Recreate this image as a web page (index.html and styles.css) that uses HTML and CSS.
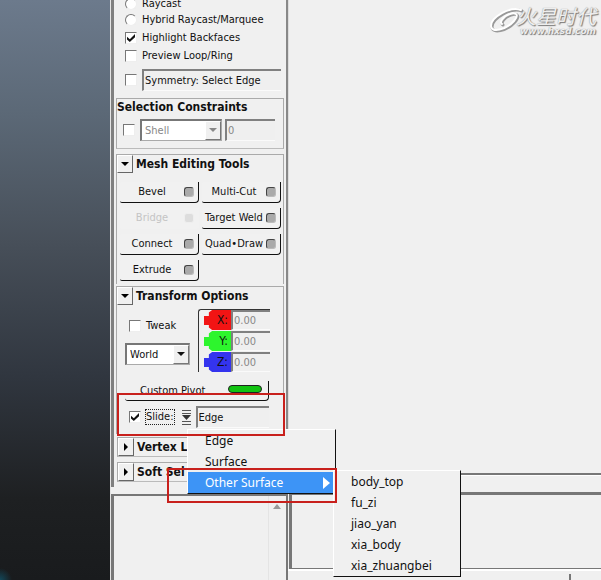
FILE: index.html
```html
<!DOCTYPE html>
<html lang="en">
<head>
<meta charset="utf-8">
<title>Modeling Toolkit</title>
<link rel="stylesheet" href="styles.css">
</head>
<body>
<div class="app">
  <div class="viewport"></div>
  <aside class="side">
    <div class="toolkit">
      <div class="picks">
        <label class="pick short"><input type="radio" name="mode">Raycast</label>
        <label class="pick short"><input type="radio" name="mode">Hybrid Raycast/Marquee</label>
        <label class="pick"><input type="checkbox" checked>Highlight Backfaces</label>
        <label class="pick"><input type="checkbox">Preview Loop/Ring</label>
        <div class="pick sym"><input type="checkbox" aria-label="Symmetry"><input class="field" type="text" value="Symmetry: Select Edge" aria-label="Symmetry mode"></div>
      </div>
      <section class="group constraints">
        <h2 class="title">Selection Constraints</h2>
        <div class="row">
          <input type="checkbox" aria-label="Use constraint">
          <div class="drop muted"><select aria-label="Constraint"><option>Shell</option></select><span class="arrow"><svg viewBox="0 0 8 5"><path d="M0 0h8L4 4z"/></svg></span></div>
          <input class="field num muted" type="text" value="0" aria-label="Constraint value">
        </div>
      </section>
      <section class="group mesh">
        <div class="head"><button class="fold" aria-label="Fold mesh tools"><svg viewBox="0 0 8 8"><path d="M0 2h8L4 6z"/></svg></button><h2 class="title">Mesh Editing Tools</h2></div>
        <div class="tools">
          <button class="tool"><span>Bevel</span><i class="opt"></i></button>
          <button class="tool"><span>Multi-Cut</span><i class="opt"></i></button>
          <button class="tool off" disabled><span>Bridge</span><i class="opt"></i></button>
          <button class="tool"><span>Target Weld</span><i class="opt"></i></button>
          <button class="tool"><span>Connect</span><i class="opt"></i></button>
          <button class="tool"><span>Quad•Draw</span><i class="opt"></i></button>
          <button class="tool"><span>Extrude</span><i class="opt"></i></button>
        </div>
      </section>
      <section class="group transform">
        <div class="head"><button class="fold" aria-label="Fold transform options"><svg viewBox="0 0 8 8"><path d="M0 2h8L4 6z"/></svg></button><h2 class="title">Transform Options</h2></div>
        <div class="xform">
          <div class="space">
            <label class="tweak"><input type="checkbox">Tweak</label>
            <div class="drop"><select aria-label="Space"><option>World</option></select><span class="arrow"><svg viewBox="0 0 8 5"><path d="M0 0h8L4 4z"/></svg></span></div>
          </div>
          <div class="axes">
            <label class="axis x"><span>X:</span><input class="field muted" type="text" value="0.00"></label>
            <label class="axis y"><span>Y:</span><input class="field muted" type="text" value="0.00"></label>
            <label class="axis z"><span>Z:</span><input class="field muted" type="text" value="0.00"></label>
          </div>
        </div>
        <button class="pivot"><span>Custom Pivot</span><i class="lamp"></i></button>
        <div class="slide">
          <label><input type="checkbox" checked><span class="focus">Slide:</span></label>
          <svg class="list" viewBox="0 0 9 16"><path d="M0 1.500h9M0 4.500h9M0 12.500h9M0 15.500h9" stroke="#555"/><path d="M0 6h9L4.500 11z" fill="#333"/></svg>
          <input class="field" type="text" value="Edge" aria-label="Slide mode">
        </div>
      </section>
      <section class="group closed"><div class="head"><button class="fold" aria-label="Unfold vertex section"><svg viewBox="0 0 8 8"><path d="M2 0v8l4-4z"/></svg></button><h2 class="title">Vertex L</h2></div></section>
      <section class="group closed"><div class="head"><button class="fold" aria-label="Unfold soft section"><svg viewBox="0 0 8 8"><path d="M2 0v8l4-4z"/></svg></button><h2 class="title">Soft Sel</h2></div></section>
    </div>
    <div class="lower"><div class="scroll"><svg viewBox="0 0 8 5"><path d="M0 5h8L4 0z"/></svg></div></div>
  </aside>
  <main class="work">
    <div class="stage"></div>
    <div class="strip"></div>
    <div class="pane"></div>
    <div class="foot"><div></div><div></div></div>
  </main>

  <div class="logo">
    <svg viewBox="0 0 40 26"><g fill="none" stroke-linecap="round"><path d="M33 4C22 0 3 11 3 20c0 7 15 4 23-5 6-7 1-9-4-7-7 2-11 9-8 10" stroke="#999" stroke-width="3"/><path d="M32 3C21-1 2 10 2 19c0 7 15 4 23-5 6-7 1-9-4-7-7 2-11 9-8 10" stroke="#fff" stroke-width="2"/></g></svg>
    <div class="words"><b>火星时代</b><small>www.hxsd.com</small></div>
  </div>

  <div class="menu main" role="menu">
    <button class="item" role="menuitem">Edge</button>
    <button class="item" role="menuitem">Surface</button>
    <button class="item on" role="menuitem">Other Surface<svg viewBox="0 0 7 12"><path d="M0 0v12l7-6z"/></svg></button>
  </div>
  <div class="menu sub" role="menu">
    <button class="item" role="menuitem">body_top</button>
    <button class="item" role="menuitem">fu_zi</button>
    <button class="item" role="menuitem">jiao_yan</button>
    <button class="item" role="menuitem">xia_body</button>
    <button class="item" role="menuitem">xia_zhuangbei</button>
  </div>
  <div class="mark slide-mark"></div>
  <div class="mark menu-mark"></div>
</div>
</body>
</html>
```
FILE: styles.css
```css
* { box-sizing: border-box; }
body {
  margin: 0;
  background: #f0f0f0;
  color: #111;
  font: 11px/16px "DejaVu Sans Condensed", "DejaVu Sans", sans-serif;
  overflow: hidden;
}
button, input, select { font: inherit; color: inherit; margin: 0; border-radius: 0; }
button { background: none; border: 0; padding: 0; }
svg { display: block; }

.app {
  position: relative;
  display: grid;
  grid-template-columns: 110px 178px 1fr;
  min-height: 100vh;
}
.viewport {
  background:
    radial-gradient(circle at 0 100%, #12485a 0, transparent 12px),
    linear-gradient(#6c7a8c 0%, #5b6876 20%, #474f59 42%, #30363f 65%, #1e2022 86%, #191b1d 100%);
}

/* side column */
.side {
  display: flex;
  flex-direction: column;
  border-left: 1px solid #e4e4e4;
}
.toolkit {
  border-left: 3px solid #808080;
  border-right: 2px solid #888;
  padding: 0 2px 3px;
  height: 487px;
}
.picks { margin-top: -4px; padding: 0 3px 0 9px; }
.pick { display: flex; align-items: center; gap: 5px; height: 18px; }
.pick.short { height: 16px; }
.pick.short + .pick:not(.short) { margin-top: 1px; }
.sym { height: 22px; margin-top: 4px; }

input[type="checkbox"], input[type="radio"] {
  appearance: none;
  flex: none;
  width: 12px;
  height: 12px;
  border: 1px solid;
  border-color: #777 #eee #eee #777;
  background: #fff;
}
input[type="radio"] { border-radius: 50%; }
input[type="checkbox"]:checked {
  display: grid;
  place-items: center;
}
input[type="checkbox"]:checked::before {
  content: "";
  width: 8px;
  height: 8px;
  background: #111;
  clip-path: polygon(0 35%, 35% 65%, 100% 0, 100% 40%, 35% 100%, 0 70%);
}
.field {
  min-width: 0;
  width: 100%;
  height: 22px;
  padding: 0 0 0 1px;
  border: 2px solid;
  border-color: #808080 #f0f0f0 #fafafa #808080;
  border-right-width: 0;
  border-bottom-width: 1px;
  background: #efefef;
}
.muted { color: #888; }

/* groups */
.group {
  border: 1px solid #aaa;
  border-bottom-color: #bbb;
  margin-top: 5px;
}
.title { margin: 0; font-size: 12px; line-height: 17px; font-weight: bold; white-space: nowrap; }
.head { display: flex; align-items: center; gap: 3px; height: 18px; }
.fold {
  display: grid;
  place-items: center;
  width: 16px;
  height: 18px;
  border: 1px solid;
  border-color: #fff #666 #666 #fff;
}
.fold svg { width: 8px; height: 8px; }
.constraints { height: 51px; margin-top: 7px; }
.row { display: flex; align-items: center; margin-top: 3px; padding-left: 6px; }
.row .drop { margin-left: 5px; width: 82px; }
.row .num { width: 50px; margin-left: 3px; }
.drop {
  display: flex;
  height: 22px;
  width: 65px;
  border: 2px solid;
  border-color: #777 #aaa #aaa #777;
  border-right-width: 1px;
  border-bottom-width: 1px;
  background: #fff;
}
.drop select { appearance: none; flex: 1; min-width: 0; border: 0; padding: 0 0 0 3px; background: #fff; }
.arrow {
  display: grid;
  place-items: center;
  width: 16px;
  background: #f0f0f0;
  border: 1px solid;
  border-color: #fff #777 #777 #fff;
}
.arrow svg { width: 8px; height: 5px; fill: currentColor; }

.mesh { height: 130px; border-bottom: 0; }
.tools {
  display: grid;
  grid-template-columns: 1fr 1fr;
  gap: 5px 3px;
  padding: 9px 2px 0 3px;
}
.tool {
  display: flex;
  align-items: center;
  height: 21px;
  padding-right: 4px;
  border: solid #111;
  border-width: 0 1px 1px 0;
  border-radius: 2px 0 4px 2px;
  background: #f1f1f1;
}
.tool span { flex: 1; text-align: center; white-space: nowrap; }
.opt {
  width: 10px;
  height: 10px;
  border: 1px solid #444;
  border-right-color: #bbb;
  border-bottom-color: #bbb;
  border-radius: 3px;
  background: #aaa;
}
.off { color: #c4c4c4; border-color: transparent; }
.off .opt { border-color: #eee; background: #ddd; }

.transform { height: 148px; margin-top: 2px; border-bottom: 0; }
.xform { display: flex; gap: 8px; padding: 4px 13px 0 8px; }
.space { display: flex; flex-direction: column; gap: 9px; }
.tweak { display: flex; align-items: center; gap: 5px; margin-top: 8px; padding-left: 4px; height: 17px; }
.axes {
  flex: 1;
  min-width: 0;
  display: grid;
  gap: 1px;
  padding-left: 5px;
  border: solid #333;
  border-width: 1px 0 0 1px;
  border-radius: 3px 0 0 0;
}
.axis { display: flex; }
.axis span {
  flex: none;
  width: 27px;
  height: 20px;
  padding: 2px 3px 0 0;
  font-size: 12px;
  text-align: right;
  clip-path: polygon(0 30%, 18% 30%, 18% 12%, 30% 0, 100% 0, 100% 100%, 30% 100%, 18% 88%, 18% 75%, 0 75%);
}
.axis .field { height: 20px; }
.x span { background: #f21414; }
.y span { background: #2df52d; }
.z span { background: #3434ee; }
.pivot {
  display: flex;
  align-items: center;
  justify-content: space-between;
  width: 144px;
  height: 20px;
  margin: 9px 0 0 8px;
  padding: 0 6px 0 15px;
  border: solid #111;
  border-width: 0 1px 1px 0;
  border-radius: 2px 0 4px 3px;
}
.lamp { width: 34px; height: 8px; margin-bottom: 4px; border: 1px solid #222; border-radius: 4px; background: #12c312; }
.slide { display: flex; align-items: center; gap: 5px; margin-top: 5px; padding: 0 14px 0 12px; }
.slide label { display: flex; align-items: center; gap: 5px; margin-right: 3px; }
.focus { outline: 1px dotted #222; line-height: 14px; }
.list { flex: none; width: 9px; height: 16px; }
.closed { height: 20px; margin-top: 3px; margin-left: 1px; }
.closed + .closed { margin-top: 5px; }

.lower {
  flex: 1;
  margin-top: 7px;
  border: solid #777;
  border-width: 2px 2px 0 3px;
  display: flex;
  justify-content: flex-end;
}
.scroll { width: 18px; border-left: 1px solid #e4e4e4; padding: 8px 0 0 4px; }
.scroll svg { width: 8px; height: 5px; fill: #999; }

/* work area */
.work { display: flex; flex-direction: column; }
.stage { flex: 1; border-left: 1px solid #ddd; border-bottom: 2px solid #777; }
.strip { height: 17px; border-top: 1px solid #fff; }
.pane { height: 77px; margin-left: 1px; border: solid #777; border-width: 3px 0 1px 3px; }
.foot { display: grid; grid-template-columns: 1fr 32px; height: 11px; border-top: 2px solid #fff; }
.foot div + div { border-left: 2px solid #777; margin-top: 3px; }

/* logo */
.logo { position: absolute; top: 7px; right: 5px; display: flex; }
.logo svg { width: 40px; height: 26px; margin-right: -13px; }
.words { display: flex; flex-direction: column; color: #eee; text-shadow: 1px 1px 1px #777, 0 0 1px #888; }
.words b { font: italic 20px/18px "Noto Sans CJK SC", sans-serif; }
.words small { font: italic bold 9px/12px "DejaVu Sans", sans-serif; text-align: right; }

/* menus */
.menu {
  position: absolute;
  background: #f0f0f0;
  border: 1px solid;
  border-color: #fff #111 #111 #fff;
  font: 12px/21px "Noto Sans", sans-serif;
}
.main { left: 187px; top: 429px; width: 149px; }
.sub { left: 333px; top: 470px; width: 128px; }
.item { display: flex; align-items: center; justify-content: space-between; width: 100%; height: 21px; padding: 0 5px 0 17px; }
.on { background: #3d94f6; color: #fff; }
.on svg { width: 7px; height: 12px; fill: #fff; }
.mark { position: absolute; border: 2px solid #c8201c; }
.slide-mark { left: 117px; top: 393px; width: 168px; height: 43px; }
.menu-mark { left: 167px; top: 468px; width: 170px; height: 35px; }
```
